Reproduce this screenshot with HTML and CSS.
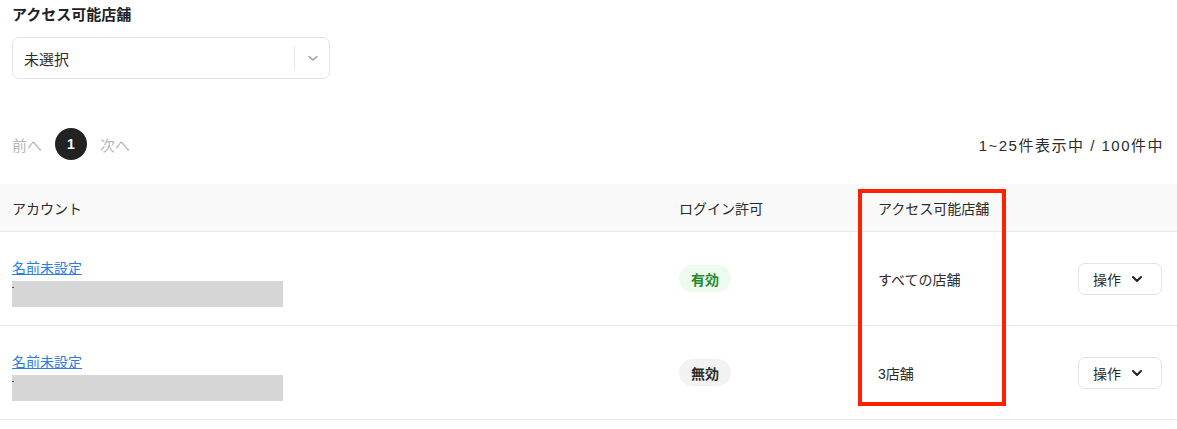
FILE: index.html
```html
<!DOCTYPE html>
<html lang="ja">
<head>
<meta charset="utf-8">
<link rel="stylesheet" href="styles.css">
</head>
<body>
<div class="page">
  <section class="filter">
    <div class="filter-label">アクセス可能店舗</div>
    <div class="select">
      <span class="select-value">未選択</span>
      <span class="select-divider"></span>
      <svg class="select-chevron" width="12" height="8" viewBox="0 0 12 8"><path d="M2 2.5 L6 6 L10 2.5" fill="none" stroke="#9a9a9a" stroke-width="1.4" stroke-linecap="round" stroke-linejoin="round"/></svg>
    </div>
  </section>

  <div class="pager-row">
    <div class="pager">
      <span class="pager-link">前へ</span>
      <span class="pager-current">1</span>
      <span class="pager-link">次へ</span>
    </div>
    <div class="count">1~25件表示中 / 100件中</div>
  </div>

  <div class="table">
    <div class="thead">
      <div class="th th-account">アカウント</div>
      <div class="th">ログイン許可</div>
      <div class="th">アクセス可能店舗</div>
      <div class="th"></div>
    </div>
    <div class="tr">
      <div class="td td-account">
        <a class="name-link" href="#">名前未設定</a>
        <div class="masked"><span class="dot"></span><span class="mask"></span></div>
      </div>
      <div class="td"><span class="badge badge-on">有効</span></div>
      <div class="td">すべての店舗</div>
      <div class="td td-action">
        <span class="action-btn">操作
          <svg width="12" height="8" viewBox="0 0 12 8"><path d="M2 2 L6 6 L10 2" fill="none" stroke="#222" stroke-width="2" stroke-linecap="round" stroke-linejoin="round"/></svg>
        </span>
      </div>
    </div>
    <div class="tr">
      <div class="td td-account">
        <a class="name-link" href="#">名前未設定</a>
        <div class="masked"><span class="dot"></span><span class="mask"></span></div>
      </div>
      <div class="td"><span class="badge badge-off">無効</span></div>
      <div class="td">3店舗</div>
      <div class="td td-action">
        <span class="action-btn">操作
          <svg width="12" height="8" viewBox="0 0 12 8"><path d="M2 2 L6 6 L10 2" fill="none" stroke="#222" stroke-width="2" stroke-linecap="round" stroke-linejoin="round"/></svg>
        </span>
      </div>
    </div>
  </div>

  <div class="highlight"></div>
</div>
</body>
</html>
```

FILE: styles.css
```css
* { box-sizing: border-box; }
html, body {
  margin: 0;
  padding: 0;
  background: #fff;
}
body {
  font-family: "Liberation Sans", "Noto Sans CJK JP", sans-serif;
  color: #2b2b2b;
  font-size: 14px;
}
.page {
  position: relative;
  width: 1177px;
}
.filter {
  padding: 4px 12px 0 12px;
}
.filter-label {
  font-size: 15px;
  font-weight: 700;
  line-height: 22px;
  color: #222;
}
.select {
  margin-top: 11px;
  width: 318px;
  height: 42px;
  border: 1px solid #e3e3e3;
  border-radius: 7px;
  display: flex;
  align-items: center;
  padding: 0 10px 0 11px;
}
.select-value {
  flex: 1;
  font-size: 15px;
  color: #2b2b2b;
}
.select-divider {
  width: 1px;
  height: 24px;
  background: #e6e6e6;
  margin-right: 12px;
}
.select-chevron { display: block; }

.pager-row {
  display: flex;
  justify-content: space-between;
  align-items: center;
  padding: 0 14px 0 12px;
  margin-top: 49px;
  height: 32px;
}
.pager {
  display: flex;
  align-items: center;
  gap: 13px;
}
.pager-link {
  color: #b8b8b8;
  font-size: 15px;
}
.pager-current {
  width: 32px;
  height: 32px;
  border-radius: 50%;
  background: #222;
  color: #fff;
  font-weight: 700;
  font-size: 14px;
  display: flex;
  align-items: center;
  justify-content: center;
}
.count {
  font-size: 15px;
  letter-spacing: 1.5px;
  margin-right: -1px;
  color: #2b2b2b;
}

.table {
  margin-top: 24px;
}
.thead, .tr {
  display: grid;
  grid-template-columns: 679px 199px 1fr auto;
  padding-right: 15px;
  border-bottom: 1px solid #e8e8e8;
}
.thead {
  background: #f9f9f9;
  height: 48px;
  align-items: center;
}
.th {
  font-size: 14px;
  color: #2b2b2b;
}
.th-account, .td-account {
  padding-left: 12px;
}
.tr {
  align-items: center;
}
.td-account {
  padding-top: 26px;
  padding-bottom: 18px;
  display: flex;
  flex-direction: column;
  align-items: flex-start;
}
.name-link {
  color: #2a7de1;
  text-decoration: underline;
  font-size: 14px;
  line-height: 20px;
}
.masked {
  margin-top: 3px;
  display: flex;
  align-items: center;
  position: relative;
}
.dot {
  position: absolute;
  left: 0;
  top: 6px;
  width: 2px;
  height: 1px;
  background: #555;
}
.mask {
  display: block;
  width: 271px;
  height: 26px;
  background: #d6d6d6;
}
.badge {
  display: inline-flex;
  align-items: center;
  justify-content: center;
  height: 27px;
  padding: 0 12px;
  border-radius: 14px;
  font-weight: 700;
  font-size: 14px;
}
.badge-on {
  background: #edfaee;
  color: #1f8a2c;
}
.badge-off {
  background: #f2f2f2;
  color: #2b2b2b;
}
.td {
  font-size: 14px;
}
.action-btn {
  display: inline-flex;
  align-items: center;
  gap: 10px;
  height: 32px;
  padding: 0 18px 0 14px;
  border: 1px solid #e3e3e3;
  border-radius: 7px;
  font-size: 14px;
  color: #2b2b2b;
}
.action-btn svg { display: block; }

.highlight {
  position: absolute;
  left: 858px;
  top: 189px;
  width: 148px;
  height: 217px;
  border: 4px solid #ff2200;
  pointer-events: none;
}
```
